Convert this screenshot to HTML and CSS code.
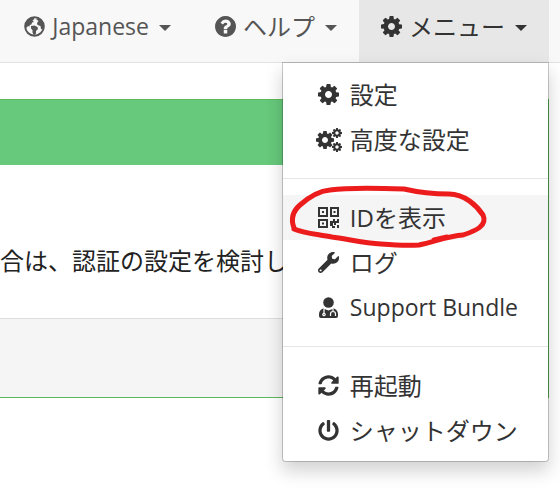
FILE: index.html
```
<!DOCTYPE html>
<html lang="ja">
<head>
    <meta charset="UTF-8">
    <meta name="viewport" content="width=device-width, initial-scale=1.0">
    <title>Syncthing</title>
    <link rel="stylesheet" href="styles.css">
</head>
<body>

    <!-- Shared icon shapes -->
    <svg class="icon-defs" aria-hidden="true">
        <symbol id="icon-cog" viewBox="0 128 1536 1536">
            <path d="M1024 896q0-106-75-181t-181-75-181 75-75 181 75 181 181 75 181-75 75-181zm512-109v222q0 12-8 23t-20 13l-185 28q-19 54-39 91 35 50 107 138 10 12 10 25t-9 23q-27 37-99 108t-94 71q-12 0-26-9l-138-108q-44 23-91 38-16 136-29 186-7 28-36 28h-222q-14 0-24.500-8.500t-11.500-21.500l-28-184q-49-16-90-37l-141 107q-10 9-25 9-14 0-25-11-126-114-165-168-7-10-7-23 0-12 8-23 15-21 51-66.500t54-70.500q-27-50-41-99l-183-27q-13-2-21-12.500t-8-23.500v-222q0-12 8-23t19-13l186-28q14-46 39-92-40-57-107-138-10-12-10-24 0-10 9-23 26-36 98.500-107.500t94.500-71.500q13 0 26 10l138 107q44-23 91-38 16-136 29-186 7-28 36-28h222q14 0 24.500 8.500t11.500 21.500l28 184q49 16 90 37l142-107q9-9 24-9 13 0 25 10 129 119 165 170 7 8 7 22 0 12-8 23-15 21-51 66.500t-54 70.500q26 50 41 98l183 28q13 2 21 12.500t8 23.500z"/>
        </symbol>
    </svg>

    <nav class="navbar">
        <button type="button" class="nav-button">
            <svg class="icon" viewBox="0 0 21 21" aria-hidden="true">
                <circle cx="10.500" cy="10.500" r="9.300" fill="none" stroke="currentColor" stroke-width="2"/>
                <path d="M2 7 5 3 9 1 10.500 3 8.500 4.500 10 6 8 6.500 7.500 8.500 5.500 9 6 10.500 4 10 3 11.500 1 11z"/>
                <path d="M7 10 10.500 9.500 13.500 11 14 13 12 15 12 17.500 10 19.500 8.500 16.500 8.500 14 7 12.500z"/>
                <path d="M12 3 15 2 18.500 5.500 20 10 18.500 13.500 17 13 16.500 10 13.500 9 13 7 14.500 5z"/>
            </svg>
            <span class="latin">Japanese</span>
            <span class="caret"></span>
        </button>
        <button type="button" class="nav-button">
            <svg class="icon" viewBox="0 128 1536 1536" aria-hidden="true">
                <path d="M896 1376v-192q0-14-9-23t-23-9h-192q-14 0-23 9t-9 23v192q0 14 9 23t23 9h192q14 0 23-9t9-23zm256-672q0-88-55.500-163t-138.500-116-170-41q-243 0-371 213-15 24 8 42l132 100q7 6 19 6 16 0 25-12 53-68 86-92 34-24 86-24 48 0 85.500 26t37.500 59q0 38-20 61t-68 45q-63 28-115.500 86.500t-52.500 125.500v36q0 14 9 23t23 9h192q14 0 23-9t9-23q0-19 21.500-49.500t54.500-49.500q32-18 49-28.500t46-35 44.500-48 28-60.500 12.500-81zm384 192q0 209-103 385.500t-279.500 279.500-385.500 103-385.500-103-279.500-279.500-103-385.500 103-385.500 279.500-279.500 385.500-103 385.500 103 279.500 279.500 103 385.500z"/>
            </svg>
            ヘルプ
            <span class="caret"></span>
        </button>
        <div class="dropdown">
            <button type="button" class="nav-button open" aria-expanded="true">
                <svg class="icon" aria-hidden="true"><use href="#icon-cog"/></svg>
                メニュー
                <span class="caret"></span>
            </button>
            <ul class="dropdown-menu">
                <li>
                    <a href="#settings">
                        <svg class="icon" aria-hidden="true"><use href="#icon-cog"/></svg>
                        設定
                    </a>
                </li>
                <li>
                    <a href="#advanced">
                        <svg class="icon icon-wide" viewBox="0 0 26 24" aria-hidden="true">
                            <use href="#icon-cog" x="0" y="3" width="18" height="18"/>
                            <use href="#icon-cog" x="16" y="0" width="10" height="10"/>
                            <use href="#icon-cog" x="16" y="14" width="10" height="10"/>
                        </svg>
                        高度な設定
                    </a>
                </li>
                <li class="divider"></li>
                <li class="active">
                    <a href="#device-id">
                        <svg class="icon" viewBox="0 0 21 21" aria-hidden="true">
                            <path fill-rule="evenodd" d="M0 0h10v10H0zM2 2v6h6V2zM4 4h2v2H4zM12 0h9v10h-9zM14 2v6h5V2zM15.500 4h2v2h-2zM0 12h10v9H0zM2 14v5h6v-5zM4 15.500h2v2H4z"/>
                            <path d="M12 14h3v-2h2v2h2v-2h2v4h-3v2h-2v-2h-1v3h-3zM14 19h3v2h-3zM19 18h2v3h-2z"/>
                        </svg>
                        IDを表示
                    </a>
                    <!-- Hand-drawn ring around the entry -->
                    <svg class="marker" viewBox="0 0 200 62" aria-hidden="true">
                        <path d="M7 43C4 35 5 27 13 20C22 12 32 6 43 5C64 2 92 3 117 4C130 7 145 9 162 9C178 9 190 21 196 30C201 41 188 46 176 50C161 51 147 57 132 60C119 61 106 60 94 59C78 58 60 54 45 52C29 49 16 48 7 44M147 55L160 52"/>
                    </svg>
                </li>
                <li>
                    <a href="#log">
                        <svg class="icon" viewBox="0 0 512 512" aria-hidden="true">
                            <path d="M507.730 109.100c-2.240-9.030-13.540-12.090-20.120-5.510l-74.360 74.360-67.880-11.310-11.310-67.880 74.360-74.360c6.620-6.620 3.430-17.900-5.660-20.160-47.380-11.740-99.550.91-136.580 37.930-39.640 39.640-50.550 97.100-34.050 147.200L18.740 402.760c-24.990 24.990-24.990 65.510 0 90.500 24.990 24.990 65.510 24.990 90.500 0l213.210-213.210c50.120 16.710 107.470 5.680 147.370-34.220 37.070-37.070 49.700-89.320 37.910-136.730zM64 472c-13.250 0-24-10.750-24-24 0-13.260 10.750-24 24-24s24 10.740 24 24c0 13.250-10.750 24-24 24z"/>
                        </svg>
                        ログ
                    </a>
                </li>
                <li>
                    <a href="#support">
                        <svg class="icon" viewBox="0 0 21 21" aria-hidden="true">
                            <circle cx="10.500" cy="5.500" r="5.300"/>
                            <path d="M5 11.500 10.500 13.500 16 11.500Q20 13 20 17.500V19Q20 21 18 21H3Q1 21 1 19V17.500Q1 13 5 11.500z"/>
                            <path class="icon-detail" d="M6 12V16M15 12V14.500M12.500 19V17Q12.500 14.500 15 14.500T17.500 17V19"/>
                            <circle class="icon-detail" cx="6" cy="17.500" r="1.200"/>
                        </svg>
                        <span class="latin">Support Bundle</span>
                    </a>
                </li>
                <li class="divider"></li>
                <li>
                    <a href="#restart">
                        <svg class="icon" viewBox="0 0 512 512" aria-hidden="true">
                            <path d="M370.720 133.280C339.458 104.008 298.888 87.962 255.848 88c-77.458.068-144.328 53.178-162.791 126.850-1.344 5.363-6.122 9.150-11.651 9.150H24.103c-7.498 0-13.194-6.807-11.807-14.176C33.933 94.924 134.813 8 256 8c66.448 0 126.791 26.136 171.315 68.685L463.030 40.970C478.149 25.851 504 36.559 504 57.941V192c0 13.255-10.745 24-24 24H345.941c-21.382 0-32.090-25.851-16.971-40.971l41.750-41.749zM32 296h134.059c21.382 0 32.090 25.851 16.971 40.971l-41.750 41.750c31.262 29.273 71.835 45.319 114.876 45.280 77.418-.07 144.315-53.144 162.787-126.849 1.344-5.363 6.122-9.150 11.651-9.150h57.304c7.498 0 13.194 6.807 11.807 14.176C478.067 417.076 377.187 504 256 504c-66.448 0-126.791-26.136-171.315-68.685L48.970 471.030C33.851 486.149 8 475.441 8 454.059V320c0-13.255 10.745-24 24-24z"/>
                        </svg>
                        再起動
                    </a>
                </li>
                <li>
                    <a href="#shutdown">
                        <svg class="icon" viewBox="0 0 512 512" aria-hidden="true">
                            <path d="M400 54.100c63 45 104 118.600 104 201.900 0 136.800-110.800 247.700-247.500 248C120 504.300 8.200 393 8 256.400 7.900 173.100 48.900 99.300 111.800 54.200c11.700-8.300 28-4.800 35 7.700L162.600 90c5.900 10.500 3.100 23.800-6.600 31-41.500 30.800-68 79.600-68 134.900-.1 92.300 74.500 168.100 168 168.100 91.600 0 168.600-74.200 168-169.100-.3-51.800-24.700-101.800-68.100-134-9.700-7.200-12.400-20.500-6.500-30.900l15.800-28.100c7-12.400 23.200-16.100 34.800-7.800zM296 264V24c0-13.300-10.700-24-24-24h-32c-13.300 0-24 10.700-24 24v240c0 13.300 10.700 24 24 24h32c13.300 0 24-10.700 24-24z"/>
                        </svg>
                        シャットダウン
                    </a>
                </li>
            </ul>
        </div>
    </nav>

    <main class="container">
        <section class="panel">
            <div class="panel-heading"></div>
            <div class="panel-body">
                <p>合は、認証の設定を検討し</p>
            </div>
            <div class="panel-footer"></div>
        </section>
    </main>

</body>
</html>
```

FILE: styles.css
```
* {
    box-sizing: border-box;
}
body {
    margin: 0;
    min-height: 100vh;
    font-family: "Open Sans", "Noto Sans CJK JP", sans-serif;
    font-size: 24px;
    line-height: 33px;
    color: #222;
    background-color: #fff;
}
.latin {
    font-size: 23px;
}
.icon-defs {
    position: absolute;
    width: 0;
    height: 0;
}
.icon {
    width: 21px;
    height: 21px;
    flex: none;
    fill: currentColor;
}
.icon-wide {
    width: 26px;
    height: 24px;
    margin: 0 -3px 0 -2px;
}
.icon-detail {
    fill: none;
    stroke: #fff;
    stroke-width: 1.2;
}

/* Navbar */
.navbar {
    display: flex;
    justify-content: flex-end;
    height: 63px;
    padding-right: 11px;
    background-color: #f8f8f8;
    border-bottom: 1px solid #e3e3e3;
}
.nav-button {
    display: flex;
    align-items: center;
    gap: 7px;
    height: 62px;
    padding: 0 22px 10px;
    border: 0;
    background: none;
    font: inherit;
    color: #555;
    white-space: nowrap;
}
.nav-button.open {
    color: #333;
    background-color: #e7e7e7;
}
.caret {
    margin: 4px 0 0 3px;
    border-top: 6px solid;
    border-left: 6px solid transparent;
    border-right: 6px solid transparent;
}

/* Dropdown */
.dropdown {
    position: relative;
}
.dropdown-menu {
    position: absolute;
    top: 100%;
    right: 0;
    z-index: 10;
    min-width: 267px;
    margin: 0;
    padding: 9px 0 8px;
    list-style: none;
    background-color: #fff;
    background-clip: padding-box;
    border: 1px solid rgba(0,0,0,0.2);
    border-radius: 0 0 4px 4px;
    box-shadow: 0 9px 18px rgba(0,0,0,0.18);
}
.dropdown-menu li {
    position: relative;
}
.dropdown-menu a {
    display: flex;
    align-items: center;
    gap: 11px;
    height: 45px;
    padding: 0 30px 0 35px;
    color: #333;
    text-decoration: none;
    white-space: nowrap;
}
.dropdown-menu .active {
    background-color: #f5f5f5;
}
.dropdown-menu .divider {
    height: 1px;
    margin: 16px 0;
    background-color: #e5e5e5;
}
.marker {
    position: absolute;
    top: -10px;
    left: 4px;
    z-index: 1;
    width: 200px;
    height: 62px;
    overflow: visible;
    fill: none;
    stroke: #ed1c1c;
    stroke-width: 5;
    stroke-linecap: round;
    stroke-linejoin: round;
    pointer-events: none;
}

/* Panel */
.container {
    padding: 36px 11px 0 0;
}
.panel {
    border: 1px solid #5cb85c;
    border-left: 0;
}
.panel-heading {
    height: 65px;
    background-color: #66c97b;
}
.panel-body {
    padding: 79px 0 41px;
}
.panel-body p {
    margin: 0;
    white-space: nowrap;
}
.panel-footer {
    height: 79px;
    background-color: #f5f5f5;
    border-top: 1px solid #ddd;
}
```
